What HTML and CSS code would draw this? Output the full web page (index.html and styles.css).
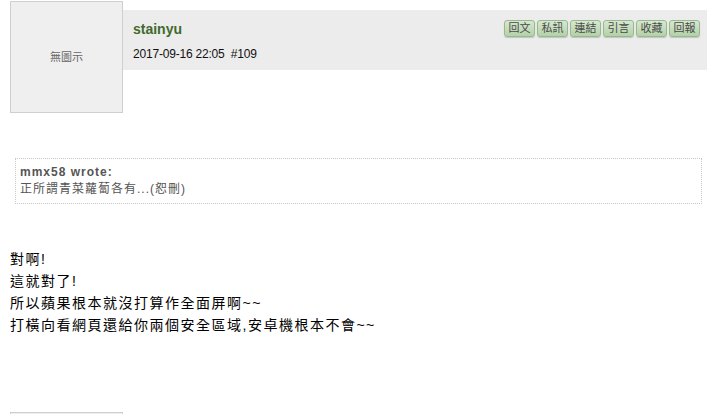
FILE: index.html
```html
<!DOCTYPE html>
<html lang="zh-Hant">
<head>
<meta charset="utf-8">
<title>post</title>
<link rel="stylesheet" href="styles.css">
</head>
<body>
<div class="page">
  <div class="post">
    <div class="post-head">
      <div class="avatar">無圖示</div>
      <div class="meta">
        <div class="meta-top">
          <span class="name">stainyu</span>
          <div class="actions">
            <span class="btn">回文</span>
            <span class="btn">私訊</span>
            <span class="btn">連結</span>
            <span class="btn">引言</span>
            <span class="btn">收藏</span>
            <span class="btn">回報</span>
          </div>
        </div>
        <div class="date">2017-09-16 22:05 &nbsp;#109</div>
      </div>
    </div>
    <div class="quote">
      <div class="quote-author">mmx58 wrote:</div>
      <div class="quote-text">正所謂青菜蘿蔔各有...(恕刪)</div>
    </div>
    <div class="content">
      對啊!<br>
      這就對了!<br>
      所以蘋果根本就沒打算作全面屏啊~~<br>
      打橫向看網頁還給你兩個安全區域,安卓機根本不會~~
    </div>
  </div>
  <div class="post">
    <div class="post-head">
      <div class="avatar avatar-next"></div>
    </div>
  </div>
</div>
</body>
</html>
```
FILE: styles.css
```css
html, body {
  margin: 0;
  padding: 0;
  background: #fff;
}
body {
  font-family: "Liberation Sans", "Noto Sans CJK TC", sans-serif;
  color: #000;
}
.page {
  padding: 1px 13px 0 10px;
}
.post-head {
  display: flex;
  align-items: flex-start;
}
.avatar {
  box-sizing: border-box;
  width: 113px;
  height: 112px;
  flex: none;
  background: #efefef;
  border: 1px solid #cfcfcf;
  display: flex;
  align-items: center;
  justify-content: center;
  font-size: 11px;
  color: #666;
  padding-bottom: 2px;
}
.meta {
  flex: 1;
  margin-top: 9px;
  height: 60px;
  box-sizing: border-box;
  background: #ececec;
  padding: 10px 7px 0 10px;
}
.meta-top {
  display: flex;
  justify-content: space-between;
  align-items: flex-start;
}
.name {
  font-size: 14px;
  font-weight: bold;
  line-height: 18px;
  color: #42692d;
}
.actions {
  display: flex;
  gap: 2px;
}
.btn {
  box-sizing: border-box;
  width: 31px;
  height: 17px;
  font-size: 11px;
  line-height: 15px;
  text-align: center;
  color: #4a4a4a;
  background: linear-gradient(#d6e8cf, #b3d1a9);
  border: 1px solid #98b98e;
  border-radius: 3px;
  box-shadow: 0 1px 1px rgba(0, 0, 0, 0.18);
}
.date {
  margin-top: 7px;
  font-size: 12px;
  line-height: 18px;
  letter-spacing: -0.2px;
  color: #111;
}
.quote {
  margin: 45px 5px 0 5px;
  height: 46px;
  box-sizing: border-box;
  border: 1px dotted #c8c8c8;
  padding: 5px 4px 0 4px;
  color: #555;
  font-size: 12px;
  letter-spacing: 1px;
}
.quote-author {
  font-weight: bold;
  line-height: 17px;
}
.quote-text {
  line-height: 17px;
}
.content {
  margin-top: 44px;
  font-size: 14px;
  line-height: 22px;
  letter-spacing: 1.5px;
  color: #000;
  margin-bottom: 76px;
}
```
